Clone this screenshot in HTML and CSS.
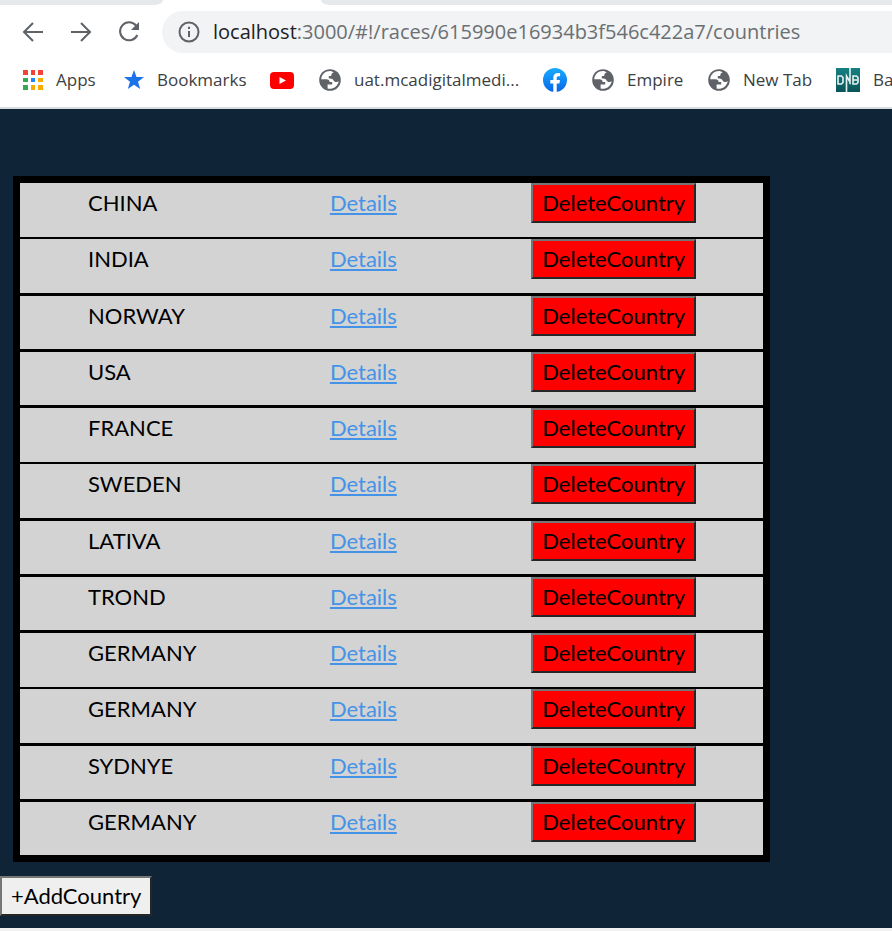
FILE: index.html
```html
<!DOCTYPE html>
<html lang="en">
<head>
<meta charset="utf-8">
<title>Countries</title>
<link rel="stylesheet" href="styles.css">
</head>
<body>
<svg class="defs" aria-hidden="true">
  <symbol id="globe" viewBox="0 0 22 22">
    <circle cx="11" cy="11" r="10.8" fill="#5f6368"/>
    <path d="M12.4 2.2C7 1.5 2.700 5 2.200 10.200H7.500C9.500 10.200 10.600 11.100 10.600 13H13.200V15.600H8.600V19.600C13.500 20.800 18.800 17.500 19.700 12.200C18.400 13.300 15.800 13.300 14.700 11.700C14 9.800 12.600 9.500 9.800 9.500V7H12.200C12.300 5 12.700 4.300 14.700 3.200Z" fill="#fff"/>
  </symbol>
</svg>
<header class="browser">
  <div class="tabs"><span class="tab-side tab-left"></span><span class="tab-active"></span><span class="tab-side tab-right"></span></div>
  <div class="toolbar">
    <button class="nav" aria-label="Back"><svg width="22" height="22" viewBox="0 0 22 22"><path d="M21 11H2.500M11 2L2 11L11 20"/></svg></button>
    <button class="nav" aria-label="Forward"><svg width="22" height="22" viewBox="0 0 22 22"><path d="M1 11H19.500M11 2L20 11L11 20"/></svg></button>
    <button class="nav" aria-label="Reload"><svg width="22" height="22" viewBox="0 0 22 22"><path d="M18 4.500A9 9 0 1 0 19.300 14"/><path class="solid" d="M21 1V9H13Z"/></svg></button>
    <div class="address">
      <svg width="22" height="22" viewBox="0 0 22 22" aria-hidden="true"><circle cx="11" cy="11" r="9.500"/><path d="M11 10V16M11 5.800V8"/></svg>
      <span class="url" role="textbox" aria-label="Address" contenteditable="true" spellcheck="false"><span class="host">localhost</span>:3000/#!/races/615990e16934b3f546c422a7/countries</span>
    </div>
  </div>
  <nav class="bookmarks" aria-label="Bookmarks">
    <a href="#" class="apps"><svg width="20" height="20" viewBox="0 0 20 20"><path fill="#f44336" d="M0 0h5v5H0zM8 0h4v5H8zM15 0h5v5h-5z"/><path fill="#34a853" d="M0 8h5v4H0zM0 15h5v5H0z"/><path fill="#1e88f5" d="M8 8h4v4H8z"/><path fill="#f9ab00" d="M15 8h5v4h-5zM8 15h4v5H8zM15 15h5v5h-5z"/></svg>Apps</a>
    <a href="#" class="starred"><svg width="20" height="20" viewBox="0 0 20 20"><path fill="#1a73e8" d="M10 0L12.500 7H20L14 11.700L16.200 19L10 14.700L3.800 19L6 11.700L0 7H7.500Z"/></svg>Bookmarks</a>
    <a href="#" class="video" aria-label="YouTube"><svg width="24" height="17" viewBox="0 0 24 17"><rect width="24" height="17" rx="4" fill="#f00"/><path d="M9.500 5V12L16 8.500Z" fill="#fff"/></svg></a>
    <a href="#" class="media"><svg width="22" height="22"><use href="#globe"/></svg>uat.mcadigitalmedi...</a>
    <a href="#" class="social" aria-label="Facebook"><svg width="24" height="24" viewBox="0 0 24 24"><defs><linearGradient id="blue" x2="0" y2="1"><stop stop-color="#18acfe"/><stop offset="1" stop-color="#0866e8"/></linearGradient></defs><circle cx="12" cy="12" r="12" fill="url(#blue)"/><path fill="#fff" d="M10.300 24V15.600H7.300V12H10.300V9.800C10.300 6.600 12 4.900 14.900 4.900L17.100 5.100V8.200H15.500C14 8.200 13.700 9 13.700 10V12H17L16.400 15.600H13.700V24Z"/></svg></a>
    <a href="#" class="empire"><svg width="22" height="22"><use href="#globe"/></svg>Empire</a>
    <a href="#" class="newtab"><svg width="22" height="22"><use href="#globe"/></svg>New Tab</a>
    <a href="#" class="bank"><svg width="24" height="24" viewBox="0 0 24 24"><defs><linearGradient id="teal" x2="0" y2="1"><stop stop-color="#168181"/><stop offset="1" stop-color="#0b5358"/></linearGradient></defs><path fill="url(#teal)" d="M0 0h24v24H0z"/><path fill="none" stroke="#e6f3f2" stroke-width="1.600" d="M2 8H5.500L7 9.500V14.500L5.500 16H2ZM10.500 24V8L14 14V0M14 8V16M17 8H20.500L22 9.500V14.500L20.500 16H17ZM17 12H21.500"/></svg>Bank</a>
  </nav>
</header>
<main>
  <table class="countries">
    <tbody>
      <tr><td>CHINA</td><td><a href="#">Details</a></td><td><button>DeleteCountry</button></td></tr>
      <tr><td>INDIA</td><td><a href="#">Details</a></td><td><button>DeleteCountry</button></td></tr>
      <tr><td>NORWAY</td><td><a href="#">Details</a></td><td><button>DeleteCountry</button></td></tr>
      <tr><td>USA</td><td><a href="#">Details</a></td><td><button>DeleteCountry</button></td></tr>
      <tr><td>FRANCE</td><td><a href="#">Details</a></td><td><button>DeleteCountry</button></td></tr>
      <tr><td>SWEDEN</td><td><a href="#">Details</a></td><td><button>DeleteCountry</button></td></tr>
      <tr><td>LATIVA</td><td><a href="#">Details</a></td><td><button>DeleteCountry</button></td></tr>
      <tr><td>TROND</td><td><a href="#">Details</a></td><td><button>DeleteCountry</button></td></tr>
      <tr><td>GERMANY</td><td><a href="#">Details</a></td><td><button>DeleteCountry</button></td></tr>
      <tr><td>GERMANY</td><td><a href="#">Details</a></td><td><button>DeleteCountry</button></td></tr>
      <tr><td>SYDNYE</td><td><a href="#">Details</a></td><td><button>DeleteCountry</button></td></tr>
      <tr><td>GERMANY</td><td><a href="#">Details</a></td><td><button>DeleteCountry</button></td></tr>
    </tbody>
  </table>
  <button class="add">+AddCountry</button>
</main>
</body>
</html>
```
FILE: styles.css
```css
* { box-sizing: border-box; }
body {
  margin: 0;
  background: #f1f1f1;
  font-family: Lato, sans-serif;
  font-size: 22px;
  line-height: 26px;
  overflow-x: hidden;
}
button { font: inherit; color: #000; }
svg { flex: none; }
.defs { display: none; }

/* Browser chrome */
.browser {
  background: #fff;
  border-bottom: 2px solid #d9dcdf;
  font-family: "Open Sans", "Noto Sans", sans-serif;
  overflow: hidden;
}
.tabs { display: flex; height: 5px; }
.tab-side { background: #e6e9ec; }
.tab-left { width: 163px; border-bottom-right-radius: 8px 5px; }
.tab-active { width: 158px; }
.tab-right { flex: 1; border-bottom-left-radius: 8px 5px; }
.toolbar { display: flex; align-items: center; padding-top: 6px; }
.nav {
  display: flex;
  margin: 0 0 0 22px;
  padding: 0;
  border: 0;
  background: none;
}
.nav + .nav { margin-left: 26px; }
.nav svg, .address svg { fill: none; stroke: #5f6368; stroke-width: 2; }
.nav .solid { fill: #5f6368; stroke: none; }
.address {
  flex: 1;
  display: flex;
  align-items: center;
  gap: 13px;
  height: 42px;
  margin-left: 22px;
  padding-left: 16px;
  border-radius: 21px 0 0 21px;
  background: #f1f3f4;
}
.url { color: #6b6f73; font-size: 20px; line-height: 28px; white-space: nowrap; outline: 0; }
.host { color: #202124; }
.bookmarks {
  display: flex;
  align-items: center;
  height: 54px;
  padding-left: 23px;
  white-space: nowrap;
}
.bookmarks a {
  display: flex;
  align-items: center;
  gap: 13px;
  flex: none;
  color: #3c4043;
  font-size: 17px;
  line-height: 24px;
  text-decoration: none;
}
.apps { width: 101px; }
.starred { width: 146px; }
.video { width: 49px; }
.media { width: 224px; }
.social { width: 49px; }
.empire { width: 116px; }
.newtab { width: 128px; }

/* Page */
main { padding: 67px 0 12px; background: #102437; }
.countries {
  width: calc(85% - 1px);
  margin: 0 0 14px 13px;
  table-layout: fixed;
  border: 7px solid #000;
  border-spacing: 0;
  background: #d3d3d3;
  color: #000;
}
td {
  height: 56px;
  padding: 0;
  border-bottom: 3px solid #000;
  vertical-align: top;
}
tr:nth-child(4n+1) td { border-bottom-width: 2px; }
tr:nth-child(4n+2) td { height: 57px; }
tr:last-child td { height: 53px; border-bottom: 0; }
td:nth-child(1) { width: 41.700%; padding: 7px 0 0 68px; }
td:nth-child(2) { width: 27.100%; padding-top: 7px; }
td a { color: #4593e6; }
td button, .add {
  display: block;
  height: 40px;
  margin: 0;
  padding: 0 9px;
  border: 2px solid;
  border-color: #767676 #262626 #262626 #767676;
  border-radius: 0;
}
td button { background: #f00; }
.add { background: #efefef; }
```
